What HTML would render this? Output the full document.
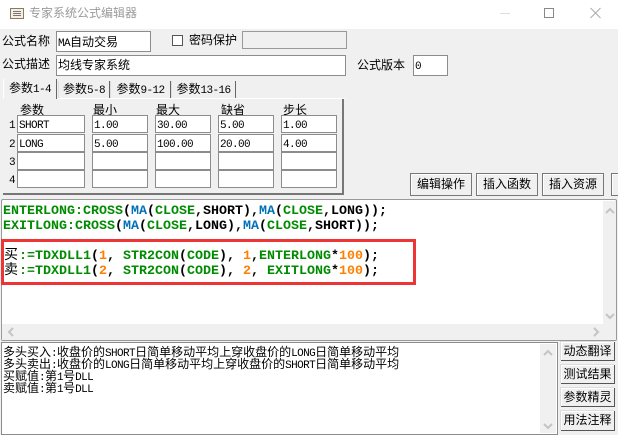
<!DOCTYPE html>
<html>
<head>
<meta charset="utf-8">
<style>
html,body{margin:0;padding:0}
body{width:618px;height:435px;overflow:hidden;position:relative;background:#f0f0f0;font-family:"Liberation Sans","WenQuanYi Zen Hei","Noto Sans CJK SC",sans-serif;font-size:12px;color:#000}
.a{position:absolute;white-space:nowrap}
.l{position:absolute;white-space:nowrap;font-size:12px;line-height:14px;height:14px}
.m{font-family:"Liberation Mono",monospace;font-size:11px;letter-spacing:-.6px}
.i{position:absolute;box-sizing:border-box;background:#fff;border:1px solid #8c8c8c;font-size:12px;line-height:17px;padding-left:1px;white-space:nowrap;overflow:hidden;font-family:"Liberation Sans","WenQuanYi Zen Hei",sans-serif}
.b{position:absolute;box-sizing:border-box;background:#f0f0f0;border:1px solid #777;box-shadow:inset 1px 1px 0 #fff;text-align:center;font-size:12px;white-space:nowrap;overflow:hidden}
.r{border:0;border-right:1px solid #555;border-bottom:1px solid #555;box-shadow:inset 1px 1px 0 #fff,-1px -1px 0 #ddd}
.t{position:absolute;top:81px;height:18px;line-height:17px;font-size:12px;box-sizing:border-box;border-right:1px solid #666;border-left:1px solid #ddd;text-align:center;white-space:nowrap}
.code{position:absolute;left:3px;font-family:"Liberation Mono","WenQuanYi Zen Hei",monospace;font-weight:bold;font-size:13.33px;line-height:15px;white-space:pre;color:#000}
.g{color:#008c00}.c{color:#0070b8}.o{color:#ff8000}
.d{position:absolute;left:3px;font-size:12px;line-height:12px;white-space:pre}
.sb{position:absolute;background:#f0f0f0}
</style>
</head>
<body>
<div class="a" style="left:0;top:0;width:618px;height:29px;background:#fff"></div>
<svg class="a" style="left:9px;top:7px" width="16" height="13"><rect x="1.5" y="1.5" width="13" height="10" fill="#f4efe2" stroke="#8a7a60"/><path d="M4 4.5h8M4 6.5h8M4 8.5h8" stroke="#777"/></svg>
<div class="a" style="left:29px;top:6px;line-height:15px;color:#9a9a9a">专家系统公式编辑器</div>
<svg class="a" style="left:490px;top:5px" width="128" height="20" fill="none" stroke="#888"><path d="M10 8.5h10" stroke="#ddd"/><rect x="54.5" y="3.5" width="9" height="9"/><path d="M100.5 3l10 10M110.5 3l-10 10" stroke="#aaa"/></svg>

<div class="l" style="left:2px;top:34px">公式名称</div>
<div class="i" style="left:56px;top:31px;width:95px;height:21px;line-height:20px"><span class="m">MA</span>自动交易</div>
<div class="a" style="left:172px;top:35px;width:11px;height:11px;box-sizing:border-box;background:#fff;border:1px solid #555"></div>
<div class="l" style="left:189px;top:33px">密码保护</div>
<div class="a" style="left:242px;top:31px;width:105px;height:18px;box-sizing:border-box;background:#f0f0f0;border:1px solid #999"></div>

<div class="l" style="left:2px;top:57px">公式描述</div>
<div class="i" style="left:56px;top:55px;width:290px;height:21px;line-height:18px">均线专家系统</div>
<div class="l" style="left:357px;top:58px">公式版本</div>
<div class="i" style="left:413px;top:55px;width:35px;height:21px;line-height:19px"><span class="m">0</span></div>

<div class="a" style="left:3px;top:98px;width:341px;height:97px;box-sizing:border-box;border-right:2px solid #777;border-bottom:2px solid #777;background:#f0f0f0"></div>
<div class="t" style="left:3px;top:79px;width:54px;height:20px;line-height:19px;background:#f0f0f0;border-left:1px solid #fff">参数<span class="m">1-4</span></div>
<div class="t" style="left:58px;width:52px">参数<span class="m">5-8</span></div>
<div class="t" style="left:110px;width:61px">参数<span class="m">9-12</span></div>
<div class="t" style="left:171px;width:65px">参数<span class="m">13-16</span></div>
<div class="a" style="left:57px;top:98px;width:288px;height:1px;background:#fff"></div>

<div class="l" style="left:20px;top:103px">参数</div>
<div class="l" style="left:93px;top:103px">最小</div>
<div class="l" style="left:156px;top:103px">最大</div>
<div class="l" style="left:221px;top:103px">缺省</div>
<div class="l" style="left:283px;top:103px">步长</div>

<div class="l" style="left:9px;top:117px"><span class="m">1</span></div>
<div class="l" style="left:9px;top:136px"><span class="m">2</span></div>
<div class="l" style="left:9px;top:154px"><span class="m">3</span></div>
<div class="l" style="left:9px;top:172px"><span class="m">4</span></div>

<div class="i" style="left:17px;top:115px;width:68px;height:18px"><span class="m">SHORT</span></div>
<div class="i" style="left:92px;top:115px;width:56px;height:18px"><span class="m">1.00</span></div>
<div class="i" style="left:155px;top:115px;width:56px;height:18px"><span class="m">30.00</span></div>
<div class="i" style="left:218px;top:115px;width:56px;height:18px"><span class="m">5.00</span></div>
<div class="i" style="left:281px;top:115px;width:56px;height:18px"><span class="m">1.00</span></div>

<div class="i" style="left:17px;top:134px;width:68px;height:18px"><span class="m">LONG</span></div>
<div class="i" style="left:92px;top:134px;width:56px;height:18px"><span class="m">5.00</span></div>
<div class="i" style="left:155px;top:134px;width:56px;height:18px"><span class="m">100.00</span></div>
<div class="i" style="left:218px;top:134px;width:56px;height:18px"><span class="m">20.00</span></div>
<div class="i" style="left:281px;top:134px;width:56px;height:18px"><span class="m">4.00</span></div>

<div class="i" style="left:17px;top:152px;width:68px;height:18px"></div>
<div class="i" style="left:92px;top:152px;width:56px;height:18px"></div>
<div class="i" style="left:155px;top:152px;width:56px;height:18px"></div>
<div class="i" style="left:218px;top:152px;width:56px;height:18px"></div>
<div class="i" style="left:281px;top:152px;width:56px;height:18px"></div>

<div class="i" style="left:17px;top:170px;width:68px;height:18px"></div>
<div class="i" style="left:92px;top:170px;width:56px;height:18px"></div>
<div class="i" style="left:155px;top:170px;width:56px;height:18px"></div>
<div class="i" style="left:218px;top:170px;width:56px;height:18px"></div>
<div class="i" style="left:281px;top:170px;width:56px;height:18px"></div>

<div class="b" style="left:410px;top:173px;width:62px;height:23px;line-height:21px">编辑操作</div>
<div class="b" style="left:476px;top:173px;width:62px;height:23px;line-height:21px">插入函数</div>
<div class="b" style="left:542px;top:173px;width:62px;height:23px;line-height:21px">插入资源</div>
<div class="b" style="left:611px;top:173px;width:12px;height:23px"></div>

<div class="a" style="left:1px;top:199px;width:616px;height:142px;box-sizing:border-box;background:#fff;border:1px solid #999;border-radius:2px"></div>
<div class="sb" style="left:603px;top:201px;width:13px;height:123px"></div>
<div class="sb" style="left:2px;top:324px;width:614px;height:16px"></div>
<svg class="a" style="left:603px;top:206px" width="15" height="10" fill="none" stroke="#c4c4c4" stroke-width="2"><path d="M3 7l4-4 4 4"/></svg>
<svg class="a" style="left:603px;top:311px" width="15" height="10" fill="none" stroke="#c4c4c4" stroke-width="2"><path d="M3 3l4 4 4-4"/></svg>
<svg class="a" style="left:6px;top:326px" width="12" height="12" fill="none" stroke="#c4c4c4" stroke-width="2"><path d="M7 2L3 6l4 4"/></svg>
<svg class="a" style="left:590px;top:326px" width="12" height="12" fill="none" stroke="#c4c4c4" stroke-width="2"><path d="M4 2l4 4-4 4"/></svg>

<div class="code" style="top:204px"><span class="g">ENTERLONG:CROSS</span>(<span class="c">MA</span>(<span class="g">CLOSE</span>,SHORT),<span class="c">MA</span>(<span class="g">CLOSE</span>,LONG));</div>
<div class="code" style="top:219px"><span class="g">EXITLONG:CROSS</span>(<span class="c">MA</span>(<span class="g">CLOSE</span>,LONG),<span class="c">MA</span>(<span class="g">CLOSE</span>,SHORT));</div>
<div class="code" style="top:249px;left:4px"><span style="font-weight:normal;font-size:14px">买</span><span class="g" style="margin-left:1px">:=TDXDLL1</span>(<span class="o">1</span>, <span class="g">STR2CON</span>(<span class="g">CODE</span>), <span class="o">1</span>,<span class="g">ENTERLONG</span>*<span class="o">100</span>);</div>
<div class="code" style="top:264px;left:4px"><span style="font-weight:normal;font-size:14px">卖</span><span class="g" style="margin-left:1px">:=TDXDLL1</span>(<span class="o">2</span>, <span class="g">STR2CON</span>(<span class="g">CODE</span>), <span class="o">2</span>, <span class="g">EXITLONG</span>*<span class="o">100</span>);</div>
<div class="a" style="left:1px;top:239px;width:415px;height:46px;box-sizing:border-box;border:3px solid #ee3535"></div>

<div class="a" style="left:1px;top:342px;width:557px;height:93px;box-sizing:border-box;background:#fff;border:1px solid #8c8c8c"></div>
<div class="sb" style="left:540px;top:344px;width:16px;height:89px"></div>
<svg class="a" style="left:541px;top:348px" width="15" height="10" fill="none" stroke="#c4c4c4" stroke-width="2"><path d="M3 7l4-4 4 4"/></svg>
<svg class="a" style="left:541px;top:421px" width="15" height="10" fill="none" stroke="#c4c4c4" stroke-width="2"><path d="M3 3l4 4 4-4"/></svg>
<div class="d" style="top:346px">多头买入<span class="m">:</span>收盘价的<span class="m">SHORT</span>日简单移动平均上穿收盘价的<span class="m">LONG</span>日简单移动平均</div>
<div class="d" style="top:358px">多头卖出<span class="m">:</span>收盘价的<span class="m">LONG</span>日简单移动平均上穿收盘价的<span class="m">SHORT</span>日简单移动平均</div>
<div class="d" style="top:370px">买赋值<span class="m">:</span>第<span class="m">1</span>号<span class="m">DLL</span></div>
<div class="d" style="top:382px">卖赋值<span class="m">:</span>第<span class="m">1</span>号<span class="m">DLL</span></div>

<div class="b r" style="left:561px;top:342px;width:54px;height:19px;line-height:18px">动态翻译</div>
<div class="b r" style="left:561px;top:365px;width:54px;height:19px;line-height:18px">测试结果</div>
<div class="b r" style="left:561px;top:388px;width:54px;height:19px;line-height:18px">参数精灵</div>
<div class="b r" style="left:561px;top:411px;width:54px;height:20px;line-height:18px">用法注释</div>
</body>
</html>
